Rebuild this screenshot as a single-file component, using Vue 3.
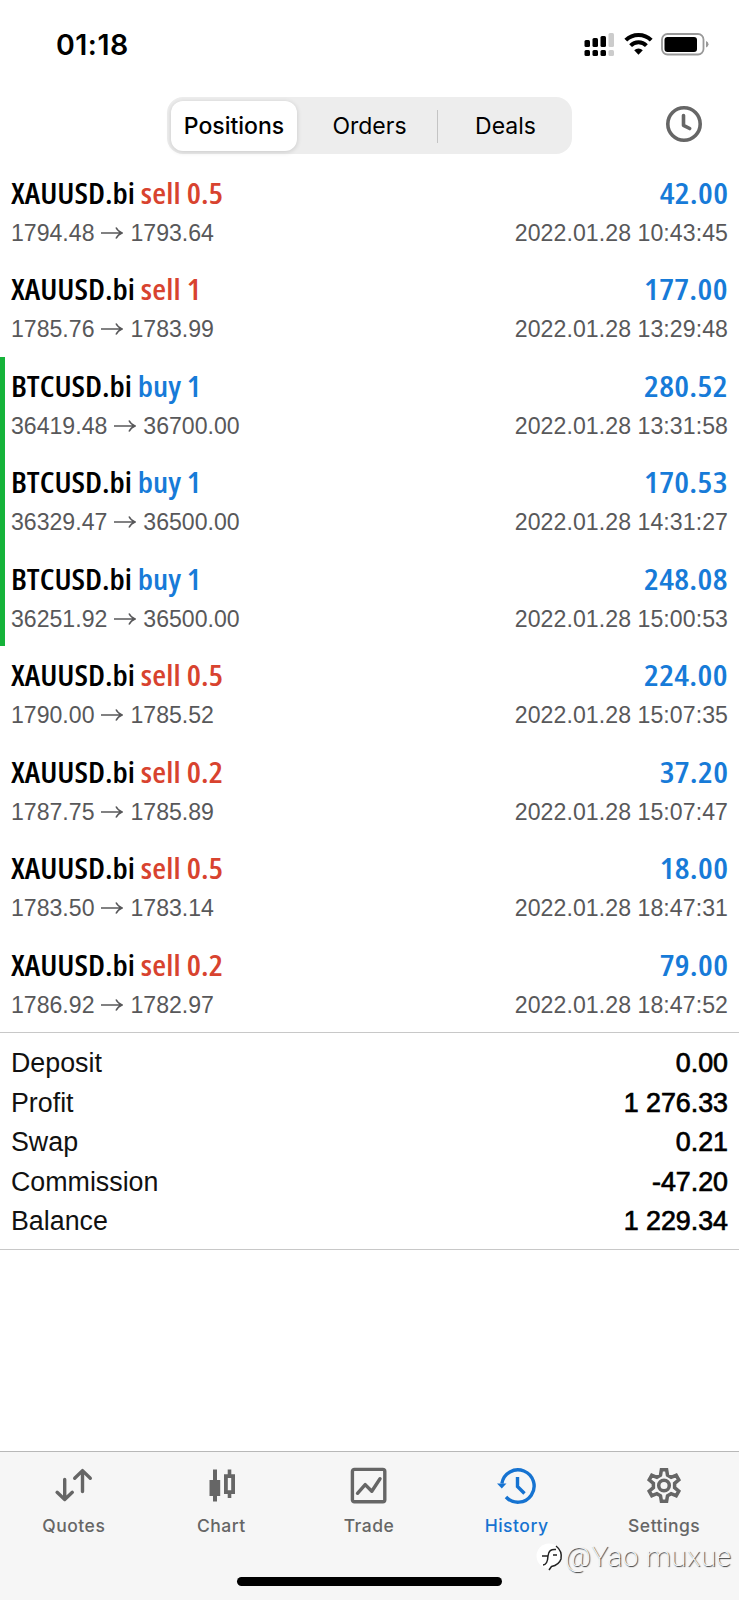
<script setup>
const deals = [
  { symbol: 'XAUUSD.bi', side: 'sell', volume: '0.5', open: '1794.48', close: '1793.64', profit: '42.00', time: '2022.01.28 10:43:45' },
  { symbol: 'XAUUSD.bi', side: 'sell', volume: '1', open: '1785.76', close: '1783.99', profit: '177.00', time: '2022.01.28 13:29:48' },
  { symbol: 'BTCUSD.bi', side: 'buy', volume: '1', open: '36419.48', close: '36700.00', profit: '280.52', time: '2022.01.28 13:31:58', marked: true },
  { symbol: 'BTCUSD.bi', side: 'buy', volume: '1', open: '36329.47', close: '36500.00', profit: '170.53', time: '2022.01.28 14:31:27', marked: true },
  { symbol: 'BTCUSD.bi', side: 'buy', volume: '1', open: '36251.92', close: '36500.00', profit: '248.08', time: '2022.01.28 15:00:53', marked: true },
  { symbol: 'XAUUSD.bi', side: 'sell', volume: '0.5', open: '1790.00', close: '1785.52', profit: '224.00', time: '2022.01.28 15:07:35' },
  { symbol: 'XAUUSD.bi', side: 'sell', volume: '0.2', open: '1787.75', close: '1785.89', profit: '37.20', time: '2022.01.28 15:07:47' },
  { symbol: 'XAUUSD.bi', side: 'sell', volume: '0.5', open: '1783.50', close: '1783.14', profit: '18.00', time: '2022.01.28 18:47:31' },
  { symbol: 'XAUUSD.bi', side: 'sell', volume: '0.2', open: '1786.92', close: '1782.97', profit: '79.00', time: '2022.01.28 18:47:52' },
]
const totals = [
  ['Deposit', '0.00'],
  ['Profit', '1 276.33'],
  ['Swap', '0.21'],
  ['Commission', '-47.20'],
  ['Balance', '1 229.34'],
]
</script>

<template>
  <div class="screen">
    <header class="status">
      <span class="clock">01:18</span>
      <svg class="status-icons" width="130" height="28" viewBox="0 0 130 28">
        <g fill="#000">
          <rect x="1.5" y="10" width="5.5" height="7" rx="1.5" />
          <rect x="9.5" y="8" width="5.5" height="9" rx="1.5" />
          <rect x="17.5" y="6" width="5.5" height="11" rx="1.5" />
          <rect x="1.5" y="20" width="5.5" height="6" rx="1.5" />
          <rect x="9.5" y="20" width="5.5" height="6" rx="1.5" />
          <rect x="17.5" y="20" width="5.5" height="6" rx="1.5" />
        </g>
        <g fill="#ccc">
          <rect x="25.5" y="3" width="5.5" height="14" rx="1.5" />
          <rect x="25.5" y="20" width="5.5" height="6" rx="1.5" />
        </g>
        <g fill="none" stroke="#000" stroke-width="4">
          <path d="M42.8 10.2a18 18 0 0 1 25.4 0" />
          <path d="M47.6 15.6a11.2 11.2 0 0 1 15.8 0" />
        </g>
        <path d="M51.2 20.3a6.2 6.2 0 0 1 8.6 0L55.5 24.7z" fill="#000" />
        <rect x="79" y="4" width="41.5" height="20.5" rx="5.5" fill="none" stroke="#999" stroke-width="1.8" />
        <rect x="81.5" y="7" width="32.5" height="15" rx="3" fill="#000" />
        <path d="M123 11v6.5q2.5-1 2.5-3.25T123 11z" fill="#999" />
      </svg>
    </header>

    <nav class="toolbar">
      <div class="segments">
        <span class="segment selected">Positions</span>
        <span class="segment orders">Orders</span>
        <span class="segment deals">Deals</span>
      </div>
      <svg class="period" width="38" height="38" viewBox="0 0 38 38" fill="none" stroke="#666" stroke-linecap="round" stroke-linejoin="round">
        <circle cx="19" cy="19" r="16.2" stroke-width="3.6" />
        <path d="M18.5 10.5V20.3L24.7 23.5" stroke-width="3.6" />
      </svg>
    </nav>

    <main class="list">
      <article v-for="d in deals" :key="d.time" class="deal" :class="{ marked: d.marked }">
        <div class="line title">
          <span class="name">{{ d.symbol }} <span :class="d.side">{{ d.side }} {{ d.volume }}</span></span>
          <span class="profit">{{ d.profit }}</span>
        </div>
        <div class="line detail">
          <span class="prices">
            <span>{{ d.open }}</span>
            <svg class="arrow" width="22" height="14" viewBox="0 0 22 14" fill="none" stroke="#58585a" stroke-width="1.6">
              <path d="M0 7H21M15 1.500Q17 5.500 21 7q-4 1.500-6 5.500" />
            </svg>
            <span>{{ d.close }}</span>
          </span>
          <span class="time">{{ d.time }}</span>
        </div>
      </article>
    </main>

    <section class="totals">
      <div v-for="[label, value] in totals" :key="label" class="total">
        <span>{{ label }}</span>
        <span class="value">{{ value }}</span>
      </div>
    </section>

    <footer class="tabs">
      <div class="tab">
        <svg width="40" height="40" viewBox="0 0 40 40" fill="none" stroke="#666" stroke-width="3.4" stroke-linecap="round" stroke-linejoin="round">
          <path d="M10.700 13.500V33M3.100 26.300l7.600 7.200 7.600-7.200" />
          <path d="M28.500 25.500V5M20.700 12.200 28.500 4.600l7.800 7.600" />
        </svg>
        <span>Quotes</span>
      </div>
      <div class="tab">
        <svg width="40" height="40" viewBox="0 0 40 40">
          <path d="M12 3.500h4V14h3.200v16H16v5.500h-4V30H8.500V14H12z" fill="#666" />
          <path d="M24.900 10.200h7.200v16h-7.200z" fill="none" stroke="#666" stroke-width="3.8" />
          <path d="M28.500 3.500V10M28.500 26.500V32" stroke="#666" stroke-width="3.6" />
        </svg>
        <span>Chart</span>
      </div>
      <div class="tab">
        <svg width="40" height="40" viewBox="0 0 40 40" fill="none" stroke="#666" stroke-width="3.4" stroke-linejoin="round">
          <rect x="3.400" y="3.400" width="32.400" height="32.400" rx="2" />
          <path d="M8.500 27.300 16.200 18.600 22.800 25.200 31 12.700" stroke-linecap="round" />
        </svg>
        <span>Trade</span>
      </div>
      <div class="tab active">
        <svg width="40" height="40" viewBox="0 0 40 40" fill="none" stroke="#1673d1" stroke-width="3.4">
          <path d="M4.900 17.500A16.200 16.200 0 1 1 9 31" />
          <path d="M0 17.500h9.500L4.800 22.500z" fill="#1673d1" stroke="none" />
          <path d="M20.500 11V20.500L27.500 27.500" />
        </svg>
        <span>History</span>
      </div>
      <div class="tab">
        <svg width="40" height="40" viewBox="0 0 40 40" fill="none" stroke="#666" stroke-width="3.500" stroke-linejoin="miter">
          <path d="M17.400 3.800h5.200l.9 5.400 3.600 2.100 5.100-2 2.600 4.500-4.200 3.600v4.200l4.200 3.600-2.600 4.500-5.100-2-3.600 2.100-.9 5.400h-5.200l-.9-5.400-3.600-2.100-5.100 2-2.600-4.500 4.200-3.600v-4.200l-4.200-3.600 2.600-4.500 5.100 2 3.600-2.100z" />
          <circle cx="20" cy="19.500" r="5.300" />
        </svg>
        <span>Settings</span>
      </div>
      <div class="home"></div>
      <div class="watermark">
        <svg width="29" height="30" viewBox="0 0 29 30" fill="none">
          <circle cx="13" cy="14" r="12.500" fill="#fff" />
          <path d="M20 4Q26.500 9 25 17Q23 23 15.500 24.500L13 28" stroke="#222" stroke-width="1.500" />
          <path d="M6 14H12M17 13H21M7 23Q11.500 23 12 14Q12.500 6.500 20 7.500" stroke="#222" stroke-width="1.500" />
        </svg>
        <span>@Yao muxue</span>
      </div>
    </footer>
  </div>
</template>

<style>
html, body { margin: 0; background: #fff; }
</style>

<style scoped>
.screen { box-sizing: border-box; width: 739px; height: 1600px; overflow: hidden; display: flex; flex-direction: column; background: #fff; color: #111; font-family: "Liberation Sans", Arial, sans-serif; }
.status { height: 97px; box-sizing: border-box; padding: 30px 26px 0 56px; display: flex; justify-content: space-between; align-items: flex-start; flex: none; }
.clock { font: 600 28.5px/30px Inter, sans-serif; letter-spacing: .5px; color: #000; }
.toolbar { height: 67px; flex: none; box-sizing: border-box; padding-left: 167px; padding-right: 36px; display: flex; justify-content: space-between; align-items: flex-start; }
.segments { width: 405px; height: 57px; box-sizing: border-box; padding: 4px; border-radius: 16px; background: #ededed; display: flex; align-items: center; font: 500 23px/50px Inter, sans-serif; color: #000; }
.segment { text-align: center; flex: none; }
.selected { width: 126px; height: 50px; border-radius: 12px; background: #fff; box-shadow: 0 1px 5px rgba(0,0,0,.16); }
.orders { width: 141px; box-sizing: border-box; padding-left: 4px; position: relative; font-weight: 400; }
.orders::after { content: ""; position: absolute; right: 0; top: 9px; width: 1px; height: 33px; background: #c4c4c4; }
.deals { width: 135px; font-weight: 400; }
.period { margin-top: 8px; }
.list { flex: none; }
.deal { box-sizing: border-box; height: 96.45px; padding: 10px 11px 0; }
.marked { border-left: 5px solid #15b33a; padding-left: 6px; }
.line { display: flex; justify-content: space-between; white-space: nowrap; }
.title { height: 46px; font: 700 29.5px/38px "Open Sans", sans-serif; font-weight: 650; font-stretch: 75%; color: #000; }
.name { transform: scaleX(1.077); transform-origin: left; }
.profit { transform: scaleX(1.12); transform-origin: right; letter-spacing: .3px; margin-right: -.3px; }
.sell { color: #d8432f; letter-spacing: .15px; }
.buy, .profit { color: #177bd8; }
.detail { height: 26px; font-size: 23.1px; line-height: 26px; color: #58585a; }
.time { letter-spacing: .07px; }
.prices { display: flex; align-items: center; }
.arrow { margin: 0 7px 0; }
.totals { flex: none; height: 218px; box-sizing: border-box; border-top: 1px solid #c8c8c8; border-bottom: 1px solid #c8c8c8; padding: 10.5px 11px; }
.total { height: 39.4px; line-height: 40px; font-size: 26.8px; display: flex; justify-content: space-between; }
.value { color: #000; -webkit-text-stroke: .7px #000; }
.tabs { margin-top: auto; flex: none; height: 149px; box-sizing: border-box; border-top: 1px solid #b8b8b8; background: #f6f6f6; display: flex; position: relative; padding-right: 1px; }
.tab { flex: 1; padding-top: 14px; display: flex; flex-direction: column; align-items: center; gap: 9px; color: #666; font: 500 17.5px/22px Inter, sans-serif; letter-spacing: .5px; }
.active { color: #1673d1; }
.home { position: absolute; left: 237px; top: 125px; width: 265px; height: 9px; border-radius: 5px; background: #000; }
.watermark { position: absolute; left: 536px; top: 90px; display: flex; align-items: center; color: #f8f8f8; font: 200 28px/30px Roboto, sans-serif; letter-spacing: .4px; text-shadow: 1px 1px 1px #333; white-space: nowrap; }
</style>
